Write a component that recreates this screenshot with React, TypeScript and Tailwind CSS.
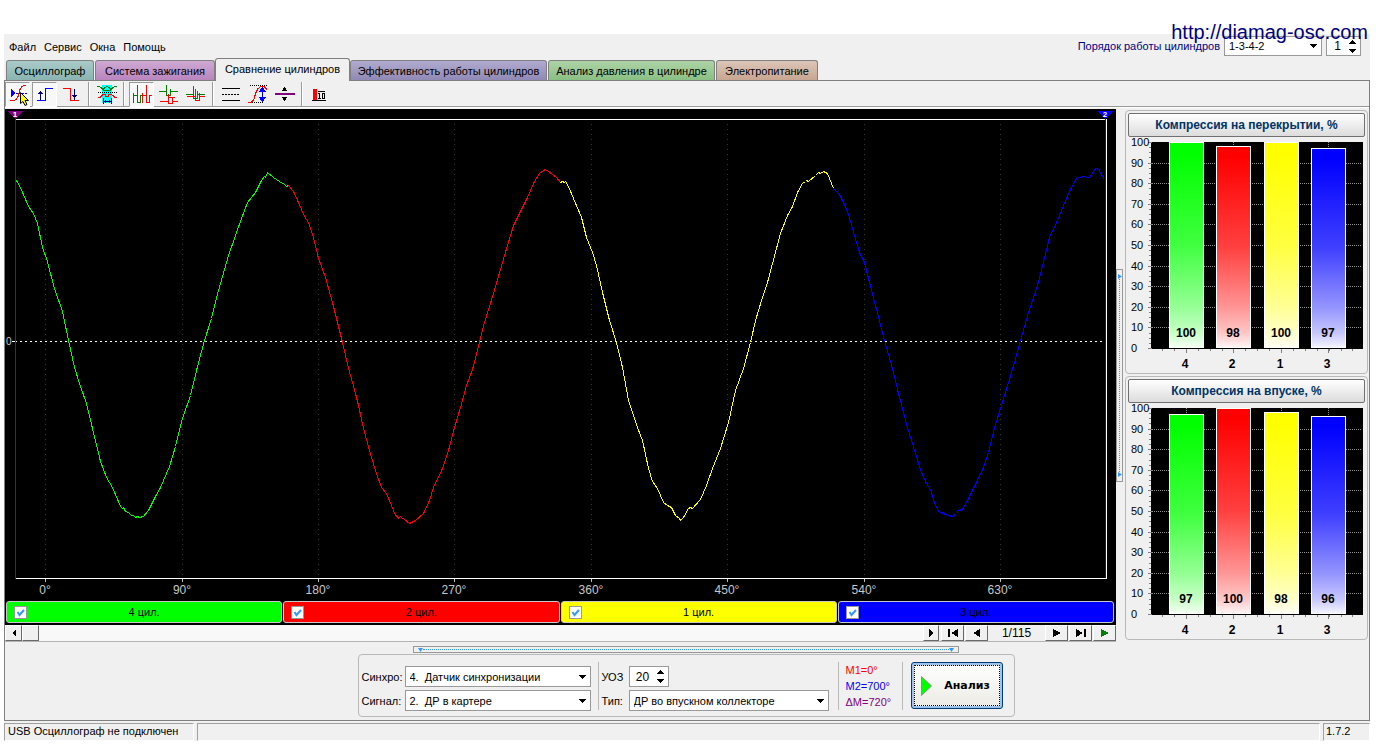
import React, { useState } from "react";

const SANS = "font-['Liberation_Sans',Arial,sans-serif]";

/* ---------- tabs ---------- */

const tabs = [
  { label: "Осциллограф", look: "w-22 from-[#a9cbc9] to-[#8ab4b1]" },
  { label: "Система зажигания", look: "w-30 from-[#cfa9d3] to-[#b985bd]" },
  { label: "Сравнение цилиндров", look: "" },
  { label: "Эффективность работы цилиндров", look: "w-[197px] from-[#b1abd0] to-[#9089b5]" },
  { label: "Анализ давления в цилиндре", look: "w-[167px] from-[#aed3a6] to-[#8abf83]" },
  { label: "Электропитание", look: "w-[102px] from-[#dcc5b8] to-[#c8a691]" },
];

function Tabs() {
  const [active, setActive] = useState(2);
  return (
    <nav className="flex items-end gap-px pl-0.5" role="tablist">
      {tabs.map((t, i) => (
        <button
          key={t.label}
          role="tab"
          aria-selected={active === i}
          onClick={() => setActive(i)}
          className={
            "rounded-t-[3px] border border-b-0 border-[#808080] whitespace-nowrap text-black " +
            (i === 2
              ? "relative -mr-px -mb-px -ml-px h-[23px] w-[135px] bg-[#f0f0f0] pb-0.5"
              : "h-5 bg-linear-to-b " + t.look)
          }
        >
          {t.label}
        </button>
      ))}
    </nav>
  );
}

/* ---------- toolbar ---------- */

type Tool = { name: string; icon: React.ReactNode; pressed?: boolean; sep?: boolean };

const tools: Tool[] = [
  {
    name: "Маркер",
    pressed: true,
    icon: (
      <>
        <path d="M5 18.500h4l2-1 2-3 1-3 1-4 2-3 2-1h2" stroke="#f00" />
        <path d="M6 7v8l5-4z" fill="#00f" />
        <path d="M11 11.500h11" stroke="#00f" strokeDasharray="2 1" />
        <path d="M15.500 10.500v11l2.500-2 2 4 2-1-2-4h3.500z" fill="#ff0" stroke="#000" shapeRendering="auto" />
      </>
    ),
  },
  {
    name: "Передний фронт",
    pressed: true,
    icon: (
      <>
        <path d="M5 18.500h8M13.500 19V6M13 6.500h8" stroke="#00f" />
        <path d="M8.500 9v9M7 10.500h3M6 11.500h5" stroke="#000080" />
      </>
    ),
  },
  {
    name: "Задний фронт",
    icon: (
      <>
        <path d="M4 6.500h8M11.500 6v13M11 18.500h9" stroke="#f00" />
        <path d="M15.500 7v11M13 13.500h5M14 14.500h3" stroke="#000080" />
      </>
    ),
  },
  {
    name: "Ширина окна",
    sep: true,
    icon: (
      <>
        <path d="M8 3h10v18h-10z" fill="#0ff" />
        <path d="M3 4.500h2l2 1 2 2 2-2 2-1 2 1 2 2 2-2 2-1h2M9 8.500h8" stroke="#008000" />
        <path d="M4 10.500h19" stroke="#000" strokeDasharray="1 1" />
        <path d="M4 15.500h2l2-2 1-1h2l1 2h2l1-2h2l2 1 2 2h2" stroke="#f00" />
        <path d="M9.500 16v6M17.500 16v6M9 19.500h9M11.500 18v3M15.500 18v3" stroke="#000080" />
      </>
    ),
  },
  {
    name: "Последовательно",
    sep: true,
    pressed: true,
    icon: (
      <>
        <path d="M4.500 21V11M4 13.500h4M8.500 3v18M9 20.500h2M11.500 13v8M12 13.500h2" stroke="#008000" />
        <path d="M13.500 21V11M14 13.500h3M17.500 3v18M18 20.500h2M20.500 13v8M21 13.500h2" stroke="#f00" />
      </>
    ),
  },
  {
    name: "Друг под другом",
    icon: (
      <>
        <path d="M3 9.500h8M10.500 3v11M11 13.500h3M14.500 7v7M15 9.500h7" stroke="#008000" />
        <path d="M4 19.500h9M12.500 12v10M13 15.500h6M13 21.500h3M16.500 16v6M17 19.500h5" stroke="#f00" />
      </>
    ),
  },
  {
    name: "Наложение",
    icon: (
      <>
        <path d="M3 12.500h8M10.500 4v13M11 16.500h3M14.500 9v8M15 12.500h7" stroke="#008000" />
        <path d="M4 14.500h9M12.500 7v12M13 18.500h3M16.500 11v8M17 14.500h5" stroke="#f00" />
      </>
    ),
  },
  {
    name: "Линии сетки",
    sep: true,
    icon: (
      <>
        <path d="M4 6.500h18M4 18.500h18" stroke="#000" />
        <path d="M4 12.500h18" stroke="#000" strokeDasharray="2 1" />
      </>
    ),
  },
  {
    name: "Размах",
    icon: (
      <>
        <path d="M5 3.500h18M5 20.500h14" stroke="#000" strokeDasharray="1 1" />
        <path d="M3 20.500h3l3-3 1-4 1-3 2-4 3-2h3l3 3" stroke="#f00" />
        <path d="M17.500 7v11" stroke="#00f" />
        <path d="M17.500 5l4 5h-8zM17.500 20l4-5h-8z" fill="#00f" />
      </>
    ),
  },
  {
    name: "Ноль",
    icon: (
      <>
        <path d="M3 11h20v2h-20z" fill="#800080" />
        <path d="M12.500 5l3 4h-6zM12.500 19l3-4h-6z" fill="#000" />
      </>
    ),
  },
  {
    name: "Шкала",
    sep: true,
    icon: (
      <>
        <path d="M6 7h4v11h-4z" fill="#f00" />
        <path d="M5 18.500h14M11 9.500h7M12.500 11v6M11 16.500h3M11 11.500h2M15 11.500h3M15 16.500h3M15.500 11v6M17.500 11v6" stroke="#000" />
      </>
    ),
  },
];

function Toolbar() {
  return (
    <div className="flex h-7 items-start gap-[2px] pt-px shadow-[inset_0_-1px_#f0f0f0,inset_0_-2px_#fff,inset_0_-3px_#999]">
      {tools.map((t) => (
        <React.Fragment key={t.name}>
          {t.sep && <span className="mx-[2px] h-6 w-0.5 border-l border-[#999] bg-white" />}
          <button
            aria-label={t.name}
            className={
              "h-[25px] w-[25px] " +
              (t.pressed ? "border border-[#999] border-r-white border-b-white bg-[#f8f8f8]" : "border border-transparent")
            }
          >
            <svg viewBox="1 1 23 23" className="block h-[23px] w-[23px]" fill="none" shapeRendering="crispEdges">
              {t.icon}
            </svg>
          </button>
        </React.Fragment>
      ))}
    </div>
  );
}

/* ---------- oscilloscope ---------- */

const traces = [
  {
    color: "#00ff00",
    points:
      "16,180 20,187 28,206 33,213 37,223 42,247 46,258 54,288 62,311 68,340 74,367 79,383 86,403 92,428 100,461 106,477 112,487 120,506 122,508 123,507 125,511 128,512 131,515 133,515 135,517 137,516 139,517 143,516 148,510 155,496 160,487 169,466 175,446 182,418 190,395 197,366 204,340 211,318 218,290 228,255 235,235 241,218 247,202 255,192 261,180 264,176 265,177 267,172 273,177 279,181 284,184 286,186 288,185",
  },
  {
    color: "#ff0000",
    points:
      "288,185 293,191 298,202 304,216 308,222 313,237 318,258 325,277 332,302 337,322 342,342 348,368 352,382 355,393 358,405 363,428 369,450 375,470 381,487 386,493 391,505 395,515 397,516 398,518 400,516 401,517 404,519 409,523 415,520 423,513 429,500 433,487 442,468 448,450 454,427 460,407 466,385 472,369 479,342 484,322 493,293 502,262 507,245 513,225 519,213 527,197 533,183 539,173 543,170 545,169 548,171 552,174 556,177 560,182",
  },
  {
    color: "#ffff00",
    points:
      "560,182 562,181 564,182 565,181 568,186 573,198 581,217 586,237 592,252 596,265 602,292 609,320 616,342 622,367 628,400 637,427 642,440 648,468 652,481 657,488 663,502 667,505 671,507 675,515 679,518 680,520 683,517 688,508 690,507 692,508 700,499 706,485 712,468 720,448 728,422 735,390 743,368 750,342 755,320 761,300 767,282 772,263 780,233 787,215 792,206 797,192 802,183 805,181 806,180 808,181 815,175 818,172 820,173 823,171 827,173 833,188",
  },
  {
    color: "#0000ff",
    points:
      "833,188 839,194 844,204 848,214 852,228 859,252 864,262 868,278 875,305 884,340 892,368 898,393 907,427 915,453 921,472 926,483 930,489 934,502 938,511 941,512 945,514 948,515 952,516 956,513 958,510 962,509 968,498 977,480 983,467 988,452 995,424 1001,405 1008,382 1014,362 1020,340 1028,312 1037,285 1043,262 1049,237 1057,220 1063,205 1070,189 1076,178 1079,177 1082,176 1089,177 1095,168 1098,169 1104,179",
  },
];

const degrees = [
  { x: 45, v: 0 },
  { x: 182, v: 90 },
  { x: 318, v: 180 },
  { x: 454, v: 270 },
  { x: 591, v: 360 },
  { x: 727, v: 450 },
  { x: 864, v: 540 },
  { x: 1000, v: 630 },
];

function Scope() {
  return (
    <svg viewBox="5 109 1111 492" className="block h-auto w-full" fill="none" shapeRendering="crispEdges">
      {degrees.map((d) => (
        <g key={d.v}>
          <line x1={d.x + 0.5} x2={d.x + 0.5} y1="124" y2="578" stroke="#383818" strokeDasharray="1 4" />
          <line x1={d.x + 0.5} x2={d.x + 0.5} y1="579" y2="582" stroke="#c0c0c0" />
          <text x={d.x} y="594" fontSize="12" fill="#c8c8c8" textAnchor="middle">
            {d.v}°
          </text>
        </g>
      ))}
      <path d="M16 119.500H1106M16 578.500H1107" stroke="#fff" />
      <path d="M12 341.500h3" stroke="#fff" />
      <path d="M15 341.500H1103" stroke="#fff" strokeDasharray="2 3" />
      <text x="6" y="345" fontSize="10" fill="#c8c8c8">
        0
      </text>
      {traces.map((t) => (
        <polyline key={t.color} points={t.points} stroke={t.color} transform="translate(.5 .5)" />
      ))}
      <path d="M15.500 118V579" stroke="#800080" />
      <path d="M1105.500 118V578" stroke="#00f" />
      <path d="M1106.500 119V578" stroke="#fff" />
      <path d="M8 111h15l-7.500 8z" fill="#800080" />
      <path d="M1098 111h15l-7.500 8z" fill="#00f" />
      <text x="15" y="117" fontSize="8" fontWeight="700" fill="#fff" textAnchor="middle">
        1
      </text>
      <text x="1105" y="117" fontSize="8" fontWeight="700" fill="#fff" textAnchor="middle">
        2
      </text>
    </svg>
  );
}

const channels = [
  { name: "4 цил.", bg: "bg-[#00ff00]" },
  { name: "2 цил.", bg: "bg-[#ff0000]" },
  { name: "1 цил.", bg: "bg-[#ffff00]" },
  { name: "3 цил.", bg: "bg-[#0000ff]" },
];

function Channels() {
  return (
    <div className="grid grid-cols-4 gap-px pr-0.5 pb-0.5 pl-px">
      {channels.map((c) => (
        <label
          key={c.name}
          className={"relative flex h-[22px] items-center justify-center rounded-[3px] border border-[#c8c8c8] text-black " + c.bg}
        >
          <input
            type="checkbox"
            defaultChecked
            className="peer absolute left-[7px] h-[13px] w-[13px] appearance-none border border-[#999] bg-white"
          />
          <svg
            viewBox="0 0 13 13"
            className="pointer-events-none invisible absolute left-[7px] h-[13px] w-[13px] peer-checked:visible"
          >
            <path d="M3.500 6l2 3 4.500-5" fill="none" stroke="#3399ff" strokeWidth="2" />
          </svg>
          {c.name}
        </label>
      ))}
    </div>
  );
}

const raised = "flex h-4 items-center justify-center border border-white border-r-[#696969] border-b-[#696969] bg-[#f0f0f0] ";

function Glyph({ d, fill = "#000" }: { d: string; fill?: string }) {
  return (
    <svg viewBox="0 0 12 10" className="h-[10px] w-3" shapeRendering="crispEdges">
      <path d={d} fill={fill} />
    </svg>
  );
}

const LEFT = "M8 1v8l-4-4z";
const RIGHT = "M4 1v8l4-4z";

function ScrollRow() {
  return (
    <div className="flex h-[17px] border-b border-[#b4b4b4]">
      <button aria-label="Влево" className={raised + "w-[17px]"}>
        <Glyph d={LEFT} />
      </button>
      <div className="flex flex-1 bg-[#f8f8f8]">
        <span className={raised + "w-[17px]"} />
      </div>
      <button aria-label="Вправо" className={raised + "w-4"}>
        <Glyph d={RIGHT} />
      </button>
      <div className="ml-0.5 flex gap-px">
        <button aria-label="Первый" className={raised + "w-[23px]"}>
          <Glyph d="M1 1h2v8h-2zM11 1v8l-7-4z" />
        </button>
        <button aria-label="Предыдущий" className={raised + "w-[23px]"}>
          <Glyph d="M9 1v8l-7-4z" />
        </button>
      </div>
      <span className="w-[57px] text-center text-xs/4">1/115</span>
      <div className="flex gap-px">
        <button aria-label="Следующий" className={raised + "w-[23px]"}>
          <Glyph d="M2 1v8l8-4z" />
        </button>
        <button aria-label="Последний" className={raised + "w-[23px]"}>
          <Glyph d="M1 1v8l7-4zM9 1h2v8h-2z" />
        </button>
        <button aria-label="Пуск" className={raised + "w-[23px]"}>
          <Glyph d="M2 1v8l8-4z" fill="#008000" />
        </button>
      </div>
    </div>
  );
}

/* ---------- compression panels ---------- */

const cylinders = [
  { id: 4, x: 1169, color: "#00ff00" },
  { id: 2, x: 1216, color: "#ff0000" },
  { id: 1, x: 1264, color: "#ffff00" },
  { id: 3, x: 1311, color: "#0000ff" },
];

const TOP = 142;
const BASE = 348;
const yOf = (v: number) => Math.round(BASE - ((BASE - TOP) * v) / 100);

function Compression({ title, values }: { title: string; values: number[] }) {
  const steps = [0, 10, 20, 30, 40, 50, 60, 70, 80, 90, 100];
  return (
    <section className="flex flex-col rounded-[4px] border border-[#b8b8b8] p-0.5">
      <button className="h-6 rounded-[2px] border border-[#707070] bg-linear-to-b from-white to-[#dcdcdc] text-xs font-bold text-[#003366]">
        {title}
      </button>
      <svg viewBox="1128 137 237 234" className="block h-auto w-full" shapeRendering="crispEdges">
        <defs>
          {cylinders.map((c) => (
            <linearGradient key={c.id} id={"fill" + c.id + values[0]} x1="0" y1="0" x2="0" y2="1">
              <stop offset="0.05" stopColor={c.color} />
              <stop offset="0.5" stopColor={c.color} stopOpacity="0.75" />
              <stop offset="0.8" stopColor={c.color} stopOpacity="0.42" />
              <stop offset="0.93" stopColor={c.color} stopOpacity="0.22" />
              <stop offset="1" stopColor={c.color} stopOpacity="0.05" />
            </linearGradient>
          ))}
        </defs>
        <rect x="1151" y={TOP} width="212" height={BASE - TOP + 1} fill="#000" />
        {steps.map((s) => (
          <g key={s}>
            {s > 0 && s < 100 && (
              <line x1="1152" x2="1362" y1={yOf(s) + 0.5} y2={yOf(s) + 0.5} stroke="#909090" strokeDasharray="1 1" />
            )}
            <line x1="1148" x2="1152" y1={yOf(s) + 0.5} y2={yOf(s) + 0.5} stroke="#808080" />
            <text x="1131" y={yOf(s) + 4} fontSize="11">
              {s}
            </text>
          </g>
        ))}
        <line x1="1150" x2="1150" y1={TOP} y2={BASE} stroke="#808080" strokeWidth="2" strokeDasharray="1 4.15" />
        <line x1="1162" x2="1363" y1={BASE + 2} y2={BASE + 2} stroke="#808080" strokeWidth="2" strokeDasharray="1 10.9" />
        {cylinders.map((c, i) => {
          const y = yOf(values[i]);
          return (
            <g key={c.id}>
              <line x1={c.x + 17.5} x2={c.x + 17.5} y1={TOP} y2={y} stroke="#909090" strokeDasharray="1 1" />
              <line x1={c.x + 17.5} x2={c.x + 17.5} y1={BASE + 1} y2={BASE + 5} stroke="#808080" />
              <rect x={c.x} y={y} width="35" height={BASE - y} fill="#fff" />
              <rect x={c.x + 1} y={y + 1} width="33" height={BASE - y - 2} fill={`url(#fill${c.id}${values[0]})`} />
              <text x={c.x + 17} y="337" fontSize="12" fontWeight="700" textAnchor="middle">
                {values[i]}
              </text>
              <text x={c.x + 16} y="368" fontSize="12" fontWeight="700" textAnchor="middle">
                {c.id}
              </text>
            </g>
          );
        })}
      </svg>
    </section>
  );
}

/* ---------- form controls ---------- */

function Select({ label, options, className }: { label: string; options: string[]; className: string }) {
  return (
    <span className={"relative block " + className}>
      <select aria-label={label} className="block h-full w-full appearance-none border border-[#999] bg-white pl-1 text-black">
        {options.map((o) => (
          <option key={o}>{o}</option>
        ))}
      </select>
      <svg viewBox="0 0 8 4" className="pointer-events-none absolute top-1/2 right-[5px] -mt-0.5 h-1 w-2" shapeRendering="crispEdges">
        <path d="M0 0h8l-4 4z" />
      </svg>
    </span>
  );
}

function Spin({ label, value, className }: { label: string; value: string; className: string }) {
  return (
    <span className={"flex items-center border border-[#999] bg-white pr-1 " + className}>
      <input aria-label={label} defaultValue={value} className="w-full min-w-0 bg-transparent text-center text-xs" />
      <span className="flex shrink-0 flex-col gap-[5px]">
        <button aria-label="Больше" className="block">
          <svg viewBox="0 0 8 4" className="block h-1 w-2" shapeRendering="crispEdges">
            <path d="M0 4h8l-4-4z" />
          </svg>
        </button>
        <button aria-label="Меньше" className="block">
          <svg viewBox="0 0 8 4" className="block h-1 w-2" shapeRendering="crispEdges">
            <path d="M0 0h8l-4 4z" />
          </svg>
        </button>
      </span>
    </span>
  );
}

function Controls() {
  return (
    <form
      className="flex h-[63px] w-[657px] items-center rounded-[4px] border border-[#b8b8b8] px-[3px]"
      onSubmit={(e) => e.preventDefault()}
    >
      <div className="grid grid-cols-[43px_186px] items-center gap-y-[3px] pt-1.5">
        <span>Синхро:</span>
        <Select label="Синхро" className="h-[21px]" options={["4.\u00a0\u00a0Датчик синхронизации"]} />
        <span>Сигнал:</span>
        <Select label="Сигнал" className="h-[21px]" options={["2.\u00a0\u00a0ДР в картере"]} />
      </div>
      <span className="mr-[3px] ml-[7px] h-12 w-px bg-[#b8b8b8]" />
      <div className="grid grid-cols-[27px_200px] items-center gap-y-[3px] pt-1.5">
        <span>УОЗ</span>
        <Spin label="УОЗ" value="20" className="h-[21px] w-10" />
        <span>Тип:</span>
        <Select label="Тип" className="h-[21px]" options={["ДР во впускном коллекторе"]} />
      </div>
      <span className="mr-[7px] ml-[9px] h-12 w-px bg-[#b8b8b8]" />
      <div className="w-14 text-[11px]/4">
        <p className="text-[#ff0000]">M1=0°</p>
        <p className="text-[#0000ff]">M2=700°</p>
        <p className="text-[#800080]">ΔM=720°</p>
      </div>
      <span className="mr-2 h-12 w-px bg-[#b8b8b8]" />
      <button className="flex h-[47px] w-[92px] items-center rounded-[3px] border border-[#003c74] bg-[#9cc4ee] p-0.5 font-bold">
        <span className="flex h-full w-full items-center border border-dotted border-black bg-linear-to-b from-white to-[#ecebe5] pl-1.5">
          <svg viewBox="0 0 11 20" className="h-5 w-[11px]">
            <path d="M.5.5v19l10-9.500z" fill="#00ff00" stroke="#909090" />
          </svg>
          <span className="flex-1 pl-1 text-center font-['DejaVu_Sans',Tahoma,sans-serif]">Анализ</span>
        </span>
      </button>
    </form>
  );
}

const menu = ["Файл", "Сервис", "Окна", "Помощь"];

export default function App() {
  return (
    <div className={"relative min-h-screen bg-white pt-[34px] pr-3 pl-1 text-[11px]/[14px] text-black " + SANS}>
      <a
        href="http://diamag-osc.com"
        className="absolute top-5 right-3.5 z-10 text-xl/6 text-[#000080]"
      >
        http://diamag-osc.com
      </a>
      <div className="bg-[#f0f0f0]">
        <header className="flex h-6 items-center justify-between pr-[9px] pl-[5px]">
          <nav className="flex gap-2 pt-0.5">
            {menu.map((m) => (
              <button key={m}>{m}</button>
            ))}
          </nav>
          <div className="flex items-center gap-1">
            <span className="text-[#000080]">Порядок работы цилиндров</span>
            <Select label="Порядок работы цилиндров" className="h-5 w-[98px]" options={["1-3-4-2"]} />
            <Spin label="Номер" value="1" className="h-5 w-[35px]" />
          </div>
        </header>

        <Tabs />

        <main className="border border-[#808080]">
          <Toolbar />
          <div className="flex">
            <div className="min-w-0 flex-1">
              <div className="bg-black">
                <Scope />
                <Channels />
              </div>
              <ScrollRow />
            </div>
            <div className="flex w-[253px] shrink-0 items-center">
              <div className="mr-[2px] flex h-[213px] w-[7px] flex-col items-center justify-between border border-[#999] py-1">
                <svg viewBox="0 0 4 5" className="h-[5px] w-1">
                  <path d="M0 0v5l4-2.500z" fill="#3399ff" />
                </svg>
                <span className="w-px flex-1 border-l border-dotted border-[#3399ff]" />
                <svg viewBox="0 0 4 5" className="h-[5px] w-1">
                  <path d="M0 0v5l4-2.500z" fill="#3399ff" />
                </svg>
              </div>
              <div className="mr-px flex h-full flex-1 flex-col gap-0.5 py-px">
                <Compression title="Компрессия на перекрытии, %" values={[100, 98, 100, 97]} />
                <Compression title="Компрессия на впуске, %" values={[97, 100, 98, 96]} />
              </div>
            </div>
          </div>
          <div className="flex flex-col items-center gap-px pt-1 pr-0.5 pb-[3px]">
            <div className="flex h-[7px] w-[546px] items-center justify-between border border-[#999] px-1">
              <svg viewBox="0 0 5 4" className="h-1 w-[5px]">
                <path d="M0 0h5l-2.500 4z" fill="#3399ff" />
              </svg>
              <span className="h-px flex-1 border-t border-dotted border-[#3399ff]" />
              <svg viewBox="0 0 5 4" className="h-1 w-[5px]">
                <path d="M0 0h5l-2.500 4z" fill="#3399ff" />
              </svg>
            </div>
            <Controls />
          </div>
        </main>

        <footer className="flex gap-[3px] pt-0.5">
          <span className="h-[18px] w-[190px] border border-r-white border-b-white border-[#a0a0a0] pl-[3px]">
            USB Осциллограф не подключен
          </span>
          <span className="h-[18px] flex-1 border border-r-white border-b-white border-[#a0a0a0]" />
          <span className="h-[18px] w-[47px] border border-r-white border-b-white border-[#a0a0a0] pl-0.5">1.7.2</span>
        </footer>
      </div>
    </div>
  );
}
